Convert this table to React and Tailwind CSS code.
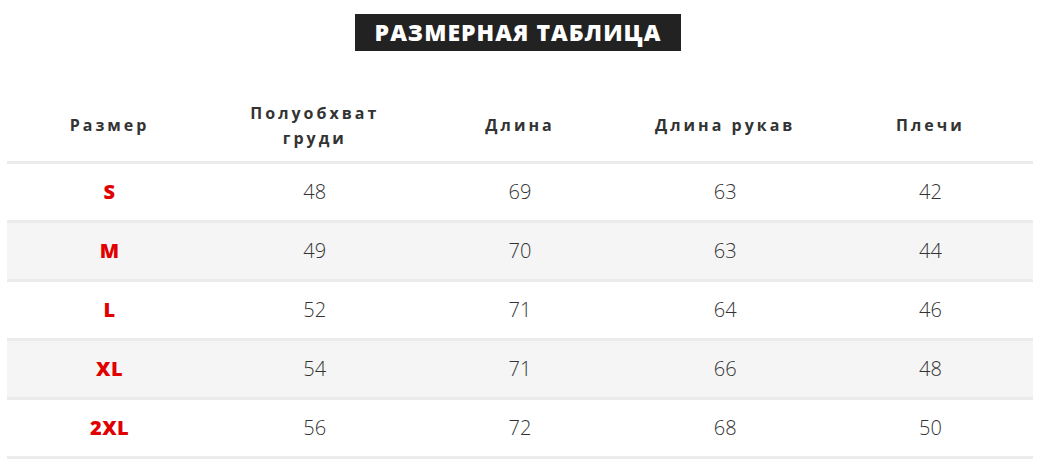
import React from 'react';

const rows = [
  { size: 'S', chest: 48, length: 69, sleeve: 63, shoulders: 42 },
  { size: 'M', chest: 49, length: 70, sleeve: 63, shoulders: 44 },
  { size: 'L', chest: 52, length: 71, sleeve: 64, shoulders: 46 },
  { size: 'XL', chest: 54, length: 71, sleeve: 66, shoulders: 48 },
  { size: '2XL', chest: 56, length: 72, sleeve: 68, shoulders: 50 },
];

const font = { fontFamily: '"Open Sans", "DejaVu Sans", sans-serif' };

export default function App() {
  return (
    <div className="w-[1046px] h-[472px] bg-white overflow-hidden" style={font}>
      {/* Title */}
      <div className="flex justify-center pt-[14px] pr-[10px]">
        <h1 className="bg-[#222222] text-white font-extrabold text-[23px] leading-[37px] h-[37px] px-[20px] tracking-[1px]">
          РАЗМЕРНАЯ ТАБЛИЦА
        </h1>
      </div>

      {/* Table */}
      <div className="mx-[7px] mt-[39px] w-[1026px]">
        <div className="grid grid-cols-5 h-[74px] items-center border-b-[3px] border-[#ebebeb] text-[#333] font-bold text-[16px] leading-[25px] tracking-[3px] text-center">
          <div>Размер</div>
          <div>Полуобхват<br />груди</div>
          <div>Длина</div>
          <div>Длина рукав</div>
          <div>Плечи</div>
        </div>
        {rows.map((r, i) => (
          <div
            key={r.size}
            className={`grid grid-cols-5 h-[59px] items-center border-b-[3px] border-[#ebebeb] text-center text-[20px] text-[#333] font-light ${
              i % 2 === 1 ? 'bg-[#f5f5f5]' : 'bg-white'
            }`}
          >
            <div className="text-[#e00000] font-extrabold tracking-[0.5px]">{r.size}</div>
            <div>{r.chest}</div>
            <div>{r.length}</div>
            <div>{r.sleeve}</div>
            <div>{r.shoulders}</div>
          </div>
        ))}
      </div>
    </div>
  );
}
